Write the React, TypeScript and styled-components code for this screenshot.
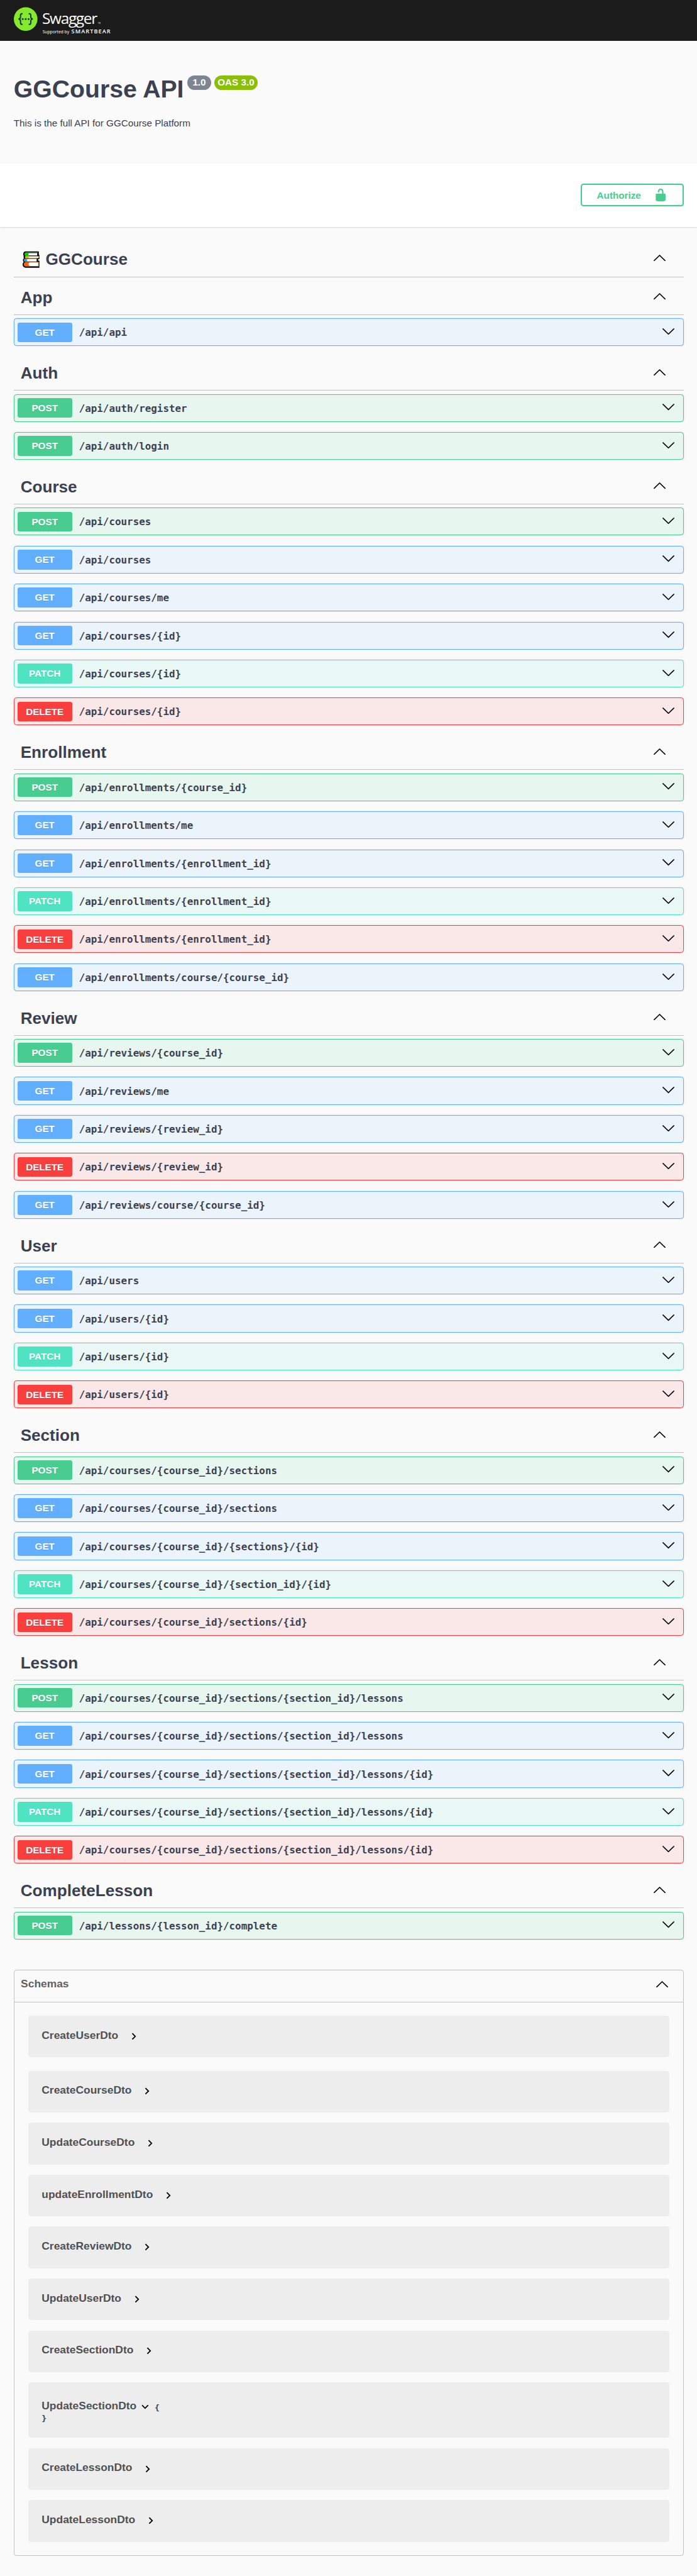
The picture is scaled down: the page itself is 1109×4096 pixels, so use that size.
import React from "react";
import styled, { createGlobalStyle } from "styled-components";

const u = (n: number) => `${(n * 0.5444).toFixed(3)}px`;

const sans = `"Liberation Sans", Arial, sans-serif`;
const mono = `"DejaVu Sans Mono", monospace`;

type Method = "GET" | "POST" | "PATCH" | "DELETE";

const methodColor: Record<Method, string> = {
  GET: "#61affe",
  POST: "#49cc90",
  PATCH: "#50e3c2",
  DELETE: "#f93e3e",
};

const methodTint: Record<Method, string> = {
  GET: "#ebf3fb",
  POST: "#e8f6f0",
  PATCH: "#e9f8f5",
  DELETE: "#fae7e7",
};

const GlobalStyle = createGlobalStyle`
  *, *::before, *::after { box-sizing: border-box; }
  body {
    margin: 0;
    background: #fafafa;
    color: #3b4151;
    font-family: ${sans};
  }
  h1, h2, h3, p { margin: 0; }
  svg { display: block; flex: none; }
`;

const Page = styled.div`
  height: 4096px;
  overflow: hidden;
  background: #fafafa;
`;

const Topbar = styled.header`
  height: ${u(120)};
  padding: ${u(18)} ${u(38)} 0;
  background: #1b1b1b;
`;

const Info = styled.section`
  height: ${u(357)};
  padding: ${u(98)} ${u(40)} 0;
`;

const TitleRow = styled.div`
  display: flex;
  align-items: flex-start;
`;

const Title = styled.h1`
  font-size: ${u(72)};
  line-height: ${u(86)};
  font-weight: 700;
  white-space: nowrap;
`;

const Badge = styled.span<{ $bg: string; $width: number }>`
  width: ${(p) => u(p.$width)};
  height: ${u(42)};
  margin-top: ${u(3)};
  margin-left: ${u(10)};
  border-radius: ${u(21)};
  background: ${(p) => p.$bg};
  color: #fff;
  font-size: ${u(28)};
  line-height: ${u(39)};
  font-weight: 700;
  text-align: center;
  white-space: nowrap;
`;

const Description = styled.p`
  margin-top: ${u(38)};
  font-size: ${u(28)};
  line-height: ${u(36)};
`;

const SchemeBar = styled.section`
  display: flex;
  align-items: center;
  justify-content: flex-end;
  height: ${u(186.5)};
  padding: 0 ${u(39.5)};
  background: #fff;
  box-shadow: 0 1px 2px rgba(0, 0, 0, 0.15);
`;

const AuthorizeButton = styled.button`
  display: flex;
  align-items: center;
  width: ${u(301)};
  height: ${u(66)};
  padding: 0 ${u(43)} 0 ${u(44)};
  justify-content: space-between;
  border: 2px solid #49cc90;
  border-radius: ${u(8)};
  background: transparent;
  box-shadow: 0 1px 2px rgba(0, 0, 0, 0.1);
  color: #49cc90;
  font: 700 ${u(28)} ${sans};
`;

const Content = styled.main`
  padding: ${u(40.5)} ${u(39.5)} 0 ${u(40)};
`;

const TagHeading = styled.div<{ $tall?: boolean }>`
  display: flex;
  align-items: center;
  justify-content: space-between;
  height: ${(p) => u(p.$tall ? 106 : 100)};
  margin-bottom: ${u(10)};
  padding: ${(p) => u(p.$tall ? 3 : 0)} ${u(53)} 0 ${u(20)};
  border-bottom: 1px solid rgba(59, 65, 81, 0.3);
`;

const TagName = styled.h3`
  display: flex;
  align-items: center;
  font-size: ${u(48)};
  line-height: ${u(60)};
  font-weight: 700;
`;

const ChevronBox = styled.span<{ $lift: number }>`
  padding-bottom: ${(p) => u(p.$lift)};
`;

const OpBlock = styled.div<{ $method: Method }>`
  display: flex;
  align-items: center;
  height: ${u(81)};
  margin-bottom: ${u(30)};
  padding: 0 ${u(25)} 0 ${u(9)};
  border: 1px solid ${(p) => methodColor[p.$method]};
  border-radius: ${u(8)};
  background: ${(p) => methodTint[p.$method]};
  box-shadow: 0 0 2px rgba(0, 0, 0, 0.19);
`;

const MethodBadge = styled.span<{ $method: Method }>`
  width: ${u(160)};
  height: ${u(58)};
  border-radius: ${u(6)};
  background: ${(p) => methodColor[p.$method]};
  color: #fff;
  font-size: ${u(28)};
  line-height: ${u(57)};
  font-weight: 700;
  text-align: center;
  text-shadow: 0 1px 0 rgba(0, 0, 0, 0.1);
`;

const OpPath = styled.span`
  flex: 1;
  padding: ${u(2)} 0 0 ${u(20)};
  font-family: ${mono};
  font-size: ${u(29.2)};
  font-weight: 700;
  white-space: nowrap;
`;

const Schemas = styled.section`
  height: ${u(1711.5)};
  margin-top: ${u(89)};
  border: 1px solid rgba(59, 65, 81, 0.3);
  border-radius: ${u(8)};
`;

const SchemasHeader = styled.div`
  display: flex;
  align-items: center;
  justify-content: space-between;
  height: ${u(93)};
  padding: 0 ${u(43)} ${u(10)} ${u(19)};
  border-bottom: 1px solid rgba(59, 65, 81, 0.3);
`;

const SchemasTitle = styled.h2`
  color: #606060;
  font-size: ${u(32)};
  line-height: ${u(40)};
  font-weight: 700;
`;

const ModelList = styled.div`
  padding: ${u(39)} ${u(40)} 0;
`;

const ModelBox = styled.div<{ $gap: number; $open?: boolean }>`
  height: ${(p) => u(p.$open ? 161.8 : 121.8)};
  margin-bottom: ${(p) => u(p.$gap)};
  padding: ${(p) => u(p.$open ? 49 : 38)} ${u(40)} 0;
  border-radius: ${u(8)};
  background: #ededed;
`;

const ModelLine = styled.div`
  display: flex;
  align-items: center;
  height: ${u(40)};
`;

const ModelName = styled.span`
  color: #505050;
  font-size: ${u(32)};
  line-height: ${u(40)};
  font-weight: 700;
`;

const Toggle = styled.span<{ $open?: boolean }>`
  padding-top: ${u(4)};
  margin-left: ${(p) => u(p.$open ? 6 : 25)};
  svg { transform: ${(p) => (p.$open ? "rotate(90deg)" : "none")}; }
`;

const Brace = styled.span`
  display: block;
  font-family: ${mono};
  font-size: ${u(24)};
  line-height: ${u(28)};
  font-weight: 700;
`;

const OpenBrace = styled(Brace)`
  padding-top: ${u(7)};
  margin-left: ${u(7)};
`;

const px = (n: number) => n * 0.5444;

const Logo = () => (
  <svg width={px(300)} height={px(90)} viewBox="38 18 300 90">
    <circle cx="74.4" cy="55.3" r="34.5" fill="#85ea2d" />
    <g fill="none" stroke="#173647" strokeWidth="3.7">
      <path d="M65.6 39.4h-1.6c-3.4 0-4.6 1.6-4.6 4.8v5.2c0 3.6-1.6 5.6-6 5.8 4.4.2 6 2.2 6 5.8v5.2c0 3.2 1.2 4.8 4.6 4.8h1.6" />
      <path d="M83.2 39.4h1.6c3.4 0 4.6 1.6 4.6 4.8v5.2c0 3.6 1.6 5.6 6 5.8-4.4.2-6 2.2-6 5.8v5.2c0 3.2-1.2 4.8-4.6 4.8h-1.6" />
    </g>
    <g fill="#173647">
      <circle cx="65.7" cy="55.2" r="2.8" />
      <circle cx="74.4" cy="55.2" r="2.8" />
      <circle cx="83.1" cy="55.2" r="2.8" />
    </g>
    <g fill="#fff" fontFamily="Open Sans, sans-serif">
      <text x="122.5" y="69.3" fontSize="45" fontWeight="400" textLength="162">Swagger</text>
      <text x="285.5" y="69.3" fontSize="5" textLength="8">TM</text>
      <text x="123.7" y="97.3" fontSize="12.5" textLength="78">Supported by</text>
      <text x="208" y="97.3" fontSize="16.8" fontWeight="600" textLength="114">SMARTBEAR</text>
    </g>
  </svg>
);

const Lock = () => (
  <svg width={px(41)} height={px(41)} viewBox="0 0 20 20" fill="#49cc90">
    <path d="M15.8 8H14V5.6C14 2.703 12.665 1 10 1 7.334 1 6 2.703 6 5.6V6h2v-.801C8 3.754 8.797 3 10 3c1.203 0 2 .754 2 2.199V8H4c-.553 0-1 .646-1 1.199V17c0 .549.428 1.139.951 1.307l1.197.387C5.672 18.861 6.55 19 7.1 19h5.8c.549 0 1.428-.139 1.951-.307l1.196-.387c.524-.167.953-.757.953-1.306V9.199C17 8.646 16.352 8 15.8 8z" />
  </svg>
);

const Chevron = ({ up = false }: { up?: boolean }) => (
  <svg width={px(35)} height={px(19)} viewBox="0 0 35 19">
    <path
      d={up ? "M1.6 17.3 17.5 1.9 33.4 17.3" : "M1.6 1.7 17.5 17.1 33.4 1.7"}
      fill="none"
      stroke="#000"
      strokeWidth="2.9"
      strokeLinecap="round"
    />
  </svg>
);

const SmallArrow = () => (
  <svg width={px(40)} height={px(40)} viewBox="0 0 24 24">
    <path d="M10 6 8.59 7.41 13.17 12l-4.58 4.59L10 18l6-6z" />
  </svg>
);

const BooksSvg = styled.svg`
  margin: 0 ${u(17)} 0 ${u(6)};
`;

const Books = () => (
  <BooksSvg width={px(50)} height={px(50)} viewBox="48 41 150 150">
    <path
      d="M70 45H190V75H195V112H184V126H195V188H72C44 186 42 150 58 138C46 128 50 112 60 106C54 98 56 92 58 86C50 74 52 48 70 45Z"
      fill="#000"
    />
    <path d="M77 54H180V60H103C92 64 92 76 103 81V86H77C60 84 60 56 77 54Z" fill="#13c40f" />
    <path d="M180 60H104C93 64 93 76 104 81H176V60Z" fill="#fff" />
    <path d="M74 87H190V105H74C66 101 66 91 74 87Z" fill="#ffb900" />
    <path d="M184 91H104C98 94 98 100 104 103H184Z" fill="#fff" />
    <path d="M70 107H172V136H70C54 132 54 111 70 107Z" fill="#3a96dd" />
    <path d="M170 112H92C82 116 82 128 92 132H170Z" fill="#fff" />
    <path d="M76 137H190V178H76C52 174 52 141 76 137Z" fill="#f7630c" />
    <path d="M184 141H112C95 145 95 169 112 173H184Z" fill="#fff" />
  </BooksSvg>
);

interface Tag {
  name: string;
  books?: boolean;
  ops: [Method, string][];
}

const tags: Tag[] = [
  { name: "GGCourse", books: true, ops: [] },
  { name: "App", ops: [["GET", "/api/api"]] },
  {
    name: "Auth",
    ops: [
      ["POST", "/api/auth/register"],
      ["POST", "/api/auth/login"],
    ],
  },
  {
    name: "Course",
    ops: [
      ["POST", "/api/courses"],
      ["GET", "/api/courses"],
      ["GET", "/api/courses/me"],
      ["GET", "/api/courses/{id}"],
      ["PATCH", "/api/courses/{id}"],
      ["DELETE", "/api/courses/{id}"],
    ],
  },
  {
    name: "Enrollment",
    ops: [
      ["POST", "/api/enrollments/{course_id}"],
      ["GET", "/api/enrollments/me"],
      ["GET", "/api/enrollments/{enrollment_id}"],
      ["PATCH", "/api/enrollments/{enrollment_id}"],
      ["DELETE", "/api/enrollments/{enrollment_id}"],
      ["GET", "/api/enrollments/course/{course_id}"],
    ],
  },
  {
    name: "Review",
    ops: [
      ["POST", "/api/reviews/{course_id}"],
      ["GET", "/api/reviews/me"],
      ["GET", "/api/reviews/{review_id}"],
      ["DELETE", "/api/reviews/{review_id}"],
      ["GET", "/api/reviews/course/{course_id}"],
    ],
  },
  {
    name: "User",
    ops: [
      ["GET", "/api/users"],
      ["GET", "/api/users/{id}"],
      ["PATCH", "/api/users/{id}"],
      ["DELETE", "/api/users/{id}"],
    ],
  },
  {
    name: "Section",
    ops: [
      ["POST", "/api/courses/{course_id}/sections"],
      ["GET", "/api/courses/{course_id}/sections"],
      ["GET", "/api/courses/{course_id}/{sections}/{id}"],
      ["PATCH", "/api/courses/{course_id}/{section_id}/{id}"],
      ["DELETE", "/api/courses/{course_id}/sections/{id}"],
    ],
  },
  {
    name: "Lesson",
    ops: [
      ["POST", "/api/courses/{course_id}/sections/{section_id}/lessons"],
      ["GET", "/api/courses/{course_id}/sections/{section_id}/lessons"],
      ["GET", "/api/courses/{course_id}/sections/{section_id}/lessons/{id}"],
      ["PATCH", "/api/courses/{course_id}/sections/{section_id}/lessons/{id}"],
      ["DELETE", "/api/courses/{course_id}/sections/{section_id}/lessons/{id}"],
    ],
  },
  { name: "CompleteLesson", ops: [["POST", "/api/lessons/{lesson_id}/complete"]] },
];

const models: { name: string; open?: boolean }[] = [
  { name: "CreateUserDto" },
  { name: "CreateCourseDto" },
  { name: "UpdateCourseDto" },
  { name: "updateEnrollmentDto" },
  { name: "CreateReviewDto" },
  { name: "UpdateUserDto" },
  { name: "CreateSectionDto" },
  { name: "UpdateSectionDto", open: true },
  { name: "CreateLessonDto" },
  { name: "UpdateLessonDto" },
];

const Operation = ({ method, path }: { method: Method; path: string }) => (
  <OpBlock $method={method}>
    <MethodBadge $method={method}>{method}</MethodBadge>
    <OpPath>{path}</OpPath>
    <ChevronBox $lift={4}>
      <Chevron />
    </ChevronBox>
  </OpBlock>
);

const Model = ({ name, open, gap }: { name: string; open?: boolean; gap: number }) => (
  <ModelBox $gap={gap} $open={open}>
    <ModelLine>
      <ModelName>{name}</ModelName>
      <Toggle $open={open}>
        <SmallArrow />
      </Toggle>
      {open && <OpenBrace>{"{"}</OpenBrace>}
    </ModelLine>
    {open && <Brace>{"}"}</Brace>}
  </ModelBox>
);

export default function App() {
  return (
    <>
      <GlobalStyle />
      <Page>
        <Topbar>
          <Logo />
        </Topbar>
        <Info>
          <TitleRow>
            <Title>GGCourse API</Title>
            <Badge $bg="#7d8492" $width={70}>1.0</Badge>
            <Badge $bg="#89bf04" $width={125}>OAS 3.0</Badge>
          </TitleRow>
          <Description>This is the full API for GGCourse Platform</Description>
        </Info>
        <SchemeBar>
          <AuthorizeButton>
            Authorize
            <Lock />
          </AuthorizeButton>
        </SchemeBar>
        <Content>
          {tags.map((tag) => (
            <React.Fragment key={tag.name}>
              <TagHeading $tall={tag.books}>
                <TagName>
                  {tag.books && <Books />}
                  {tag.name}
                </TagName>
                <ChevronBox $lift={tag.books ? 10 : 6}>
                  <Chevron up />
                </ChevronBox>
              </TagHeading>
              {tag.ops.map(([method, path]) => (
                <Operation key={method + path} method={method} path={path} />
              ))}
            </React.Fragment>
          ))}
          <Schemas>
            <SchemasHeader>
              <SchemasTitle>Schemas</SchemasTitle>
              <ChevronBox $lift={0}>
                <Chevron up />
              </ChevronBox>
            </SchemasHeader>
            <ModelList>
              {models.map((m, i) => (
                <Model key={m.name} name={m.name} open={m.open} gap={i === 0 ? 39.2 : 30} />
              ))}
            </ModelList>
          </Schemas>
        </Content>
      </Page>
    </>
  );
}
